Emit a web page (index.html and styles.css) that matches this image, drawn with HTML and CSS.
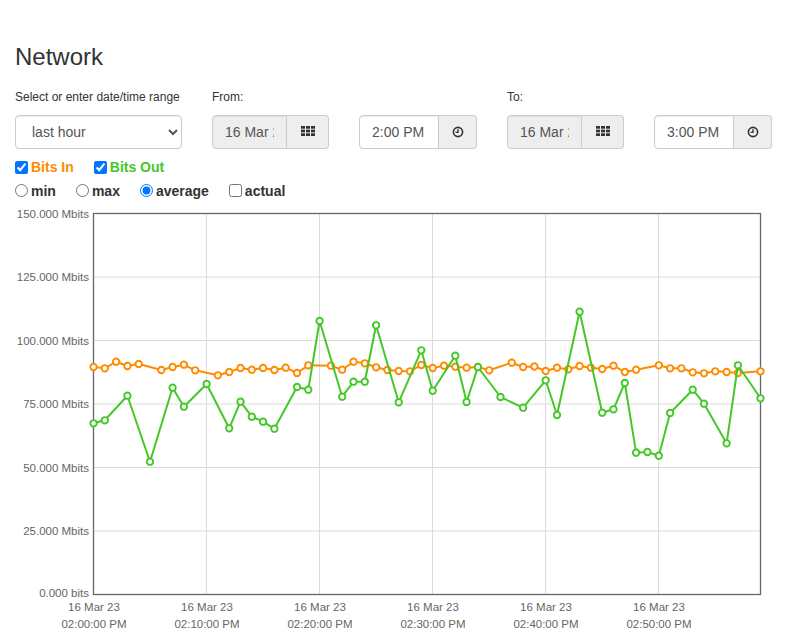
FILE: index.html
```html
<!DOCTYPE html>
<html>
<head>
<meta charset="utf-8">
<link rel="stylesheet" href="styles.css">
</head>
<body>
<h3 class="title">Network</h3>
<div class="controls">
  <div class="col col-select">
    <label class="lbl">Select or enter date/time range</label>
    <select class="form-control">
      <option>last hour</option>
    </select>
  </div>
  <div class="col col-date">
    <label class="lbl">From:</label>
    <div class="input-group">
      <input class="form-control ro date-input" type="text" value="16 Mar 2023" readonly>
      <span class="addon addon-date">
        <svg width="14" height="10" viewBox="0 0 14 10"><g fill="#333"><rect x="0" y="0" width="4" height="2.7"/><rect x="5" y="0" width="4" height="2.7"/><rect x="10" y="0" width="4" height="2.7"/><rect x="0" y="3.65" width="4" height="2.7"/><rect x="5" y="3.65" width="4" height="2.7"/><rect x="10" y="3.65" width="4" height="2.7"/><rect x="0" y="7.3" width="4" height="2.7"/><rect x="5" y="7.3" width="4" height="2.7"/><rect x="10" y="7.3" width="4" height="2.7"/></g></svg>
      </span>
    </div>
  </div>
  <div class="col col-time">
    <label class="lbl">&nbsp;</label>
    <div class="input-group">
      <input class="form-control time-input" type="text" value="2:00 PM">
      <span class="addon addon-time">
        <svg width="12" height="12" viewBox="0 0 12 12"><circle cx="6" cy="6" r="4.6" fill="none" stroke="#333" stroke-width="1.6"/><path d="M6 3.2V6.4H3.6" fill="none" stroke="#333" stroke-width="1.4"/></svg>
      </span>
    </div>
  </div>
  <div class="col col-date">
    <label class="lbl">To:</label>
    <div class="input-group">
      <input class="form-control ro date-input" type="text" value="16 Mar 2023" readonly>
      <span class="addon addon-date">
        <svg width="14" height="10" viewBox="0 0 14 10"><g fill="#333"><rect x="0" y="0" width="4" height="2.7"/><rect x="5" y="0" width="4" height="2.7"/><rect x="10" y="0" width="4" height="2.7"/><rect x="0" y="3.65" width="4" height="2.7"/><rect x="5" y="3.65" width="4" height="2.7"/><rect x="10" y="3.65" width="4" height="2.7"/><rect x="0" y="7.3" width="4" height="2.7"/><rect x="5" y="7.3" width="4" height="2.7"/><rect x="10" y="7.3" width="4" height="2.7"/></g></svg>
      </span>
    </div>
  </div>
  <div class="col col-time">
    <label class="lbl">&nbsp;</label>
    <div class="input-group">
      <input class="form-control time-input" type="text" value="3:00 PM">
      <span class="addon addon-time">
        <svg width="12" height="12" viewBox="0 0 12 12"><circle cx="6" cy="6" r="4.6" fill="none" stroke="#333" stroke-width="1.6"/><path d="M6 3.2V6.4H3.6" fill="none" stroke="#333" stroke-width="1.4"/></svg>
      </span>
    </div>
  </div>
</div>

<div class="opt-row row-series">
  <label class="opt"><input type="checkbox" checked><span class="bits-in">Bits In</span></label>
  <label class="opt"><input type="checkbox" checked><span class="bits-out">Bits Out</span></label>
</div>
<div class="opt-row row-mode">
  <label class="opt"><input type="radio" name="m"><span>min</span></label>
  <label class="opt"><input type="radio" name="m"><span>max</span></label>
  <label class="opt"><input type="radio" name="m" checked><span>average</span></label>
  <label class="opt"><input type="checkbox"><span>actual</span></label>
</div>

<svg class="chart" width="772" height="430" viewBox="15 204 772 430">
  <defs>
    <marker id="mo" markerUnits="userSpaceOnUse" markerWidth="10" markerHeight="10" refX="5" refY="5" overflow="visible">
      <circle cx="5" cy="5" r="3.2" fill="#fff" stroke="#ff8c00" stroke-width="1.9"/>
    </marker>
    <marker id="mg" markerUnits="userSpaceOnUse" markerWidth="10" markerHeight="10" refX="5" refY="5" overflow="visible">
      <circle cx="5" cy="5" r="3.2" fill="#fff" stroke="#44c828" stroke-width="1.9"/>
    </marker>
  </defs>
  <g class="grid">
    <line x1="93.5" y1="277" x2="760.5" y2="277"/>
    <line x1="93.5" y1="340.5" x2="760.5" y2="340.5"/>
    <line x1="93.5" y1="404" x2="760.5" y2="404"/>
    <line x1="93.5" y1="467.5" x2="760.5" y2="467.5"/>
    <line x1="93.5" y1="531" x2="760.5" y2="531"/>
    <line x1="206.5" y1="213.5" x2="206.5" y2="594.5"/>
    <line x1="319.5" y1="213.5" x2="319.5" y2="594.5"/>
    <line x1="432.5" y1="213.5" x2="432.5" y2="594.5"/>
    <line x1="545.5" y1="213.5" x2="545.5" y2="594.5"/>
    <line x1="658.5" y1="213.5" x2="658.5" y2="594.5"/>
  </g>
  <rect class="frame" x="93.5" y="213.5" width="667" height="381"/>
  <g class="ylab">
    <text x="89" y="217.5">150.000 Mbits</text>
    <text x="89" y="281">125.000 Mbits</text>
    <text x="89" y="344.5">100.000 Mbits</text>
    <text x="89" y="408">75.000 Mbits</text>
    <text x="89" y="471.5">50.000 Mbits</text>
    <text x="89" y="535">25.000 Mbits</text>
    <text x="89" y="597">0.000 bits</text>
  </g>
  <g class="xlab">
    <text x="94" y="610.5">16 Mar 23</text><text x="94" y="627.5">02:00:00 PM</text>
    <text x="207" y="610.5">16 Mar 23</text><text x="207" y="627.5">02:10:00 PM</text>
    <text x="320" y="610.5">16 Mar 23</text><text x="320" y="627.5">02:20:00 PM</text>
    <text x="433" y="610.5">16 Mar 23</text><text x="433" y="627.5">02:30:00 PM</text>
    <text x="546" y="610.5">16 Mar 23</text><text x="546" y="627.5">02:40:00 PM</text>
    <text x="659" y="610.5">16 Mar 23</text><text x="659" y="627.5">02:50:00 PM</text>
  </g>
  <polyline class="s-in" points="93.5,367 104.8,368.3 116.1,361.7 127.4,366 138.7,364 161.3,370 172.6,367 183.9,364.7 195.2,370.3 217.9,375.3 229.2,372 240.5,368 251.8,369.7 263.1,368 274.4,370 285.7,367.7 297,373 308.3,365.3 330.9,365.7 342.2,369.7 353.5,361.7 364.8,363.3 376.1,367.3 387.4,370 398.7,371 410,371.3 421.3,365 432.7,368 444,365.7 455.3,366.7 466.6,367.7 477.9,367 489.2,370.3 511.8,362.7 523.1,367 534.4,366.5 545.7,371 557,367.7 568.3,369.3 579.6,366 590.9,367.7 602.2,369 613.5,365.7 624.8,372 636.1,369.7 658.8,365.3 670.1,368.3 681.4,368.3 692.7,372.3 704,373.3 715.3,371.3 726.6,372 737.9,373 760.5,371.3"/>
  <polyline class="s-out" points="93.5,423.3 104.8,420.3 127.4,395.7 150,461.7 172.6,387.7 183.9,406.7 206.6,384 229.2,428.3 240.5,401.7 251.8,416.7 263.1,421.7 274.4,428.7 297,387 308.3,389.7 319.6,321 342.2,396.7 353.5,381.7 364.8,381.7 376.1,325.3 398.7,402.3 421.3,350.3 432.7,390.7 455.3,355.7 466.6,402 477.9,367 500.5,397 523.1,407.7 545.7,380.3 557,415 579.6,311.7 602.2,412.7 613.5,409.3 624.8,383 636.1,452.7 647.4,452 658.8,455.7 670.1,413 692.7,389.7 704,403.7 726.6,443.3 737.9,365.3 760.5,398.3"/>
</svg>
</body>
</html>
```

FILE: styles.css
```css
html, body {
  margin: 0;
  padding: 0;
  background: #fff;
}
body {
  padding: 0 15px;
  font-family: "Liberation Sans", Arial, Helvetica, sans-serif;
  font-size: 14px;
  line-height: 20px;
  color: #333;
}
.title {
  margin: 0;
  padding-top: 44px;
  font-size: 24px;
  line-height: 26px;
  font-weight: 400;
  color: #333;
}
.controls {
  display: flex;
  gap: 30px;
  margin-top: 19px;
}
.col {
  display: flex;
  flex-direction: column;
}
.lbl {
  display: block;
  height: 16px;
  font-size: 12px;
  line-height: 16px;
  margin-bottom: 10px;
  white-space: nowrap;
  color: #333;
}
.col-select { width: 167px; }
.col-date { width: 117px; }
.col-time { width: 118px; }
.form-control {
  box-sizing: border-box;
  height: 34px;
  margin: 0;
  border: 1px solid #ccc;
  border-radius: 4px;
  font-family: "Liberation Sans", Arial, Helvetica, sans-serif;
  font-size: 14px;
  color: #555;
  background: #fff;
  box-shadow: inset 0 1px 1px rgba(0,0,0,0.075);
  outline: none;
}
select.form-control {
  width: 167px;
  padding: 6px 8px 6px 12px;
}
.input-group {
  display: flex;
  height: 34px;
}
.input-group .form-control {
  border-radius: 4px 0 0 4px;
  padding: 6px 12px;
  min-width: 0;
}
.date-input { width: 75px; }
.time-input { width: 80px; }
.ro { background: #eee; }
.addon {
  box-sizing: border-box;
  display: flex;
  align-items: center;
  justify-content: center;
  height: 34px;
  border: 1px solid #ccc;
  border-left: 0;
  border-radius: 0 4px 4px 0;
  background: #eee;
}
.addon-date { width: 42px; padding-bottom: 2px; }
.addon-time { width: 38px; }
.opt-row {
  display: flex;
  gap: 20px;
  height: 20px;
}
.row-series { margin-top: 8px; }
.row-mode { margin-top: 3px; }
.opt {
  display: flex;
  align-items: center;
  font-weight: 700;
  font-size: 14px;
  line-height: 20px;
  color: #333;
}
.opt input {
  margin: 0 3px 0 0;
  width: 13px;
  height: 13px;
}
.row-mode .opt span { margin-top: 2px; }
.bits-in { color: #ff8c00; }
.bits-out { color: #44c828; }
.chart {
  display: block;
  margin-top: 4px;
}
.grid line {
  stroke: #dcdcdc;
  stroke-width: 1;
}
.frame {
  fill: none;
  stroke: #666;
  stroke-width: 1.3;
}
.ylab text {
  font-family: "Liberation Sans", Arial, sans-serif;
  font-size: 11.5px;
  fill: #666;
  text-anchor: end;
}
.xlab text {
  font-family: "Liberation Sans", Arial, sans-serif;
  font-size: 11.5px;
  fill: #666;
  text-anchor: middle;
}
.s-in {
  fill: none;
  stroke: #ff8c00;
  stroke-width: 2;
  stroke-linejoin: round;
  marker-start: url(#mo);
  marker-mid: url(#mo);
  marker-end: url(#mo);
}
.s-out {
  fill: none;
  stroke: #44c828;
  stroke-width: 2;
  stroke-linejoin: round;
  marker-start: url(#mg);
  marker-mid: url(#mg);
  marker-end: url(#mg);
}
```
